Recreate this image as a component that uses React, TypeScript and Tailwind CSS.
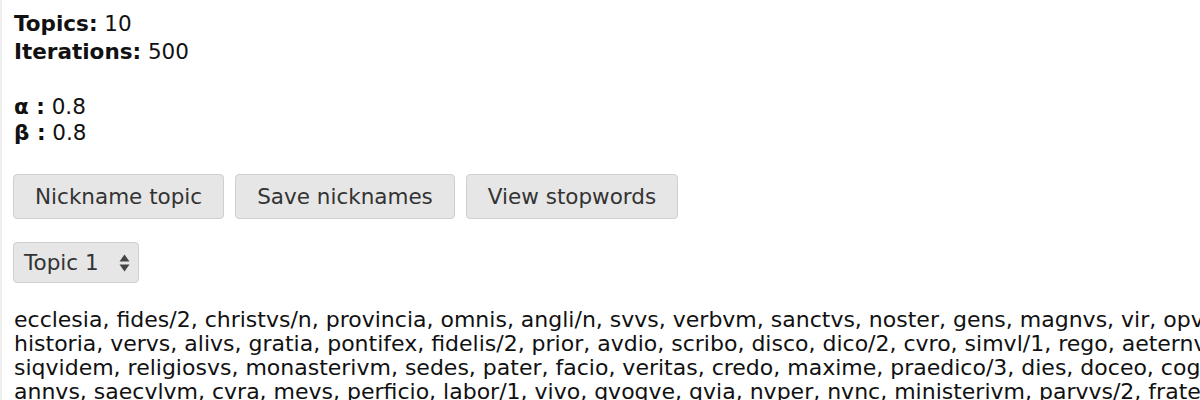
import React from 'react';

const WORDS = [
    'ecclesia, fides/2, christvs/n, provincia, omnis, angli/n, svvs, verbvm, sanctvs, noster, gens, magnvs, vir, opvs, tempvs, locvs, rex, deus, annus',
    'historia, vervs, alivs, gratia, pontifex, fidelis/2, prior, avdio, scribo, disco, dico/2, cvro, simvl/1, rego, aeternvs, frater, popvlvs',
    'siqvidem, religiosvs, monasterivm, sedes, pater, facio, veritas, credo, maxime, praedico/3, dies, doceo, cognosco, regnvm, episcopvs',
    'annvs, saecvlvm, cvra, mevs, perficio, labor/1, vivo, qvoqve, qvia, nvper, nvnc, ministerivm, parvvs/2, frater, dominvs, venio',
];

function Button({ label }: { label: string }) {
    return (
        <button className="h-[45px] px-[21px] rounded-[4px] border border-[#cfcfcf] bg-[#e6e6e6] text-[#333] text-[21.5px] leading-none">
            {label}
        </button>
    );
}

export default function App() {
    return (
        <div className="h-[400px] bg-white border-l-2 border-[#eeeeee] pl-[11px] pt-[10px] overflow-hidden font-['DejaVu_Sans',Verdana,sans-serif] text-[#111] text-[21.5px]">
            {/* Model settings */}
            <div className="pl-[1px] leading-[28px]">
                <div><b>Topics:</b> 10</div>
                <div><b>Iterations:</b> 500</div>
            </div>
            <div className="pl-[1px] leading-[26px] mt-[28px]">
                <div><b>α :</b> 0.8</div>
                <div><b>β :</b> 0.8</div>
            </div>

            {/* Actions */}
            <div className="flex gap-[11px] mt-[28px]">
                <Button label="Nickname topic" />
                <Button label="Save nicknames" />
                <Button label="View stopwords" />
            </div>

            <div className="mt-[23px]">
                <div className="inline-flex items-center h-[41px] w-[126px] pl-[10px] pr-[8px] rounded-[4px] border border-[#cfcfcf] bg-[#e6e6e6] text-[#333]">
                    <span className="flex-1 leading-none">Topic 1</span>
                    <svg width="11" height="20" viewBox="0 0 11 20" className="text-[#444]">
                        <path d="M5.5 1.5 L10.5 8.5 H0.5 Z" fill="currentColor" />
                        <path d="M5.5 18.5 L10.5 11.5 H0.5 Z" fill="currentColor" />
                    </svg>
                </div>
            </div>

            {/* Topic words */}
            <div className="pl-[1px] mt-[25px] leading-[24px] text-[22px] whitespace-nowrap">
                {WORDS.map((line, i) => (
                    <div key={i}>{line}</div>
                ))}
            </div>
        </div>
    );
}
